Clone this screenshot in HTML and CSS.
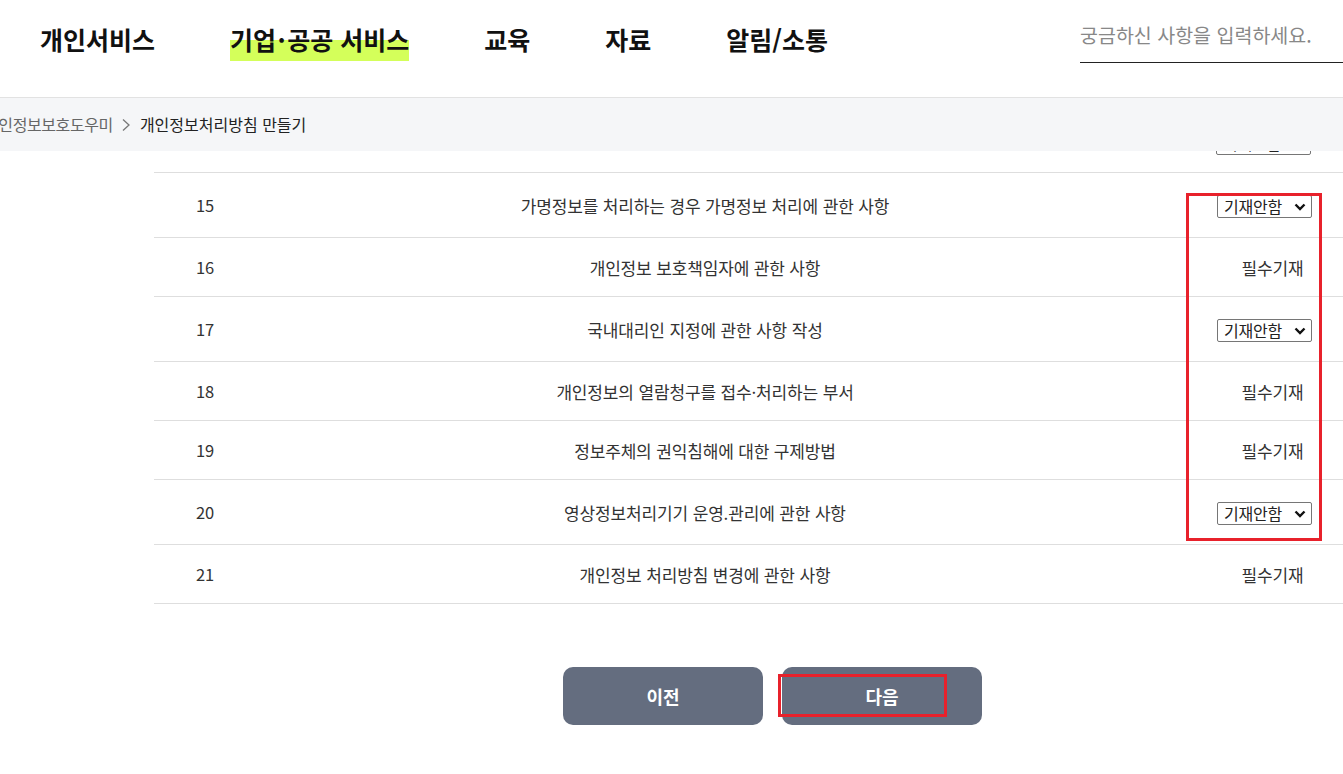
FILE: index.html
```html
<!DOCTYPE html>
<html lang="ko">
<head>
<meta charset="utf-8">
<title>개인정보처리방침 만들기</title>
<link rel="stylesheet" href="styles.css">
</head>
<body>
<header class="header">
  <nav class="gnb">
    <a class="gnb-item">개인서비스</a>
    <a class="gnb-item active"><span class="hl">기업<span class="dot">·</span>공공 서비스</span></a>
    <a class="gnb-item">교육</a>
    <a class="gnb-item">자료</a>
    <a class="gnb-item">알림/소통</a>
  </nav>
  <div class="search">
    <input class="search-input" type="text" placeholder="궁금하신 사항을 입력하세요.">
  </div>
</header>
<div class="breadcrumb">
  <div class="crumbs">
    <span class="crumb">개인정보보호도우미</span>
    <svg class="chev" width="10" height="14" viewBox="0 0 10 14"><path d="M2 1.5 L8 7 L2 12.5" fill="none" stroke="#777" stroke-width="1.3"/></svg>
    <span class="crumb current">개인정보처리방침 만들기</span>
  </div>
</div>
<main class="content">
  <div class="list">
    <div class="row clip">
      <div class="c-num"></div>
      <div class="c-title"></div>
      <div class="c-opt"><span class="sel-wrap sel-clip"><select class="sel"><option>기재안함</option></select><svg class="caret" width="12" height="8" viewBox="0 0 12 8"><path d="M1.5 1.5 L6 6 L10.5 1.5" fill="none" stroke="#111" stroke-width="2.4"/></svg></span></div>
    </div>
    <div class="row tall">
      <div class="c-num">15</div>
      <div class="c-title">가명정보를 처리하는 경우 가명정보 처리에 관한 사항</div>
      <div class="c-opt"><span class="sel-wrap"><select class="sel"><option>기재안함</option></select><svg class="caret" width="12" height="8" viewBox="0 0 12 8"><path d="M1.5 1.5 L6 6 L10.5 1.5" fill="none" stroke="#111" stroke-width="2.4"/></svg></span></div>
    </div>
    <div class="row">
      <div class="c-num">16</div>
      <div class="c-title">개인정보 보호책임자에 관한 사항</div>
      <div class="c-opt">필수기재</div>
    </div>
    <div class="row tall">
      <div class="c-num">17</div>
      <div class="c-title">국내대리인 지정에 관한 사항 작성</div>
      <div class="c-opt"><span class="sel-wrap"><select class="sel"><option>기재안함</option></select><svg class="caret" width="12" height="8" viewBox="0 0 12 8"><path d="M1.5 1.5 L6 6 L10.5 1.5" fill="none" stroke="#111" stroke-width="2.4"/></svg></span></div>
    </div>
    <div class="row">
      <div class="c-num">18</div>
      <div class="c-title">개인정보의 열람청구를 접수·처리하는 부서</div>
      <div class="c-opt">필수기재</div>
    </div>
    <div class="row">
      <div class="c-num">19</div>
      <div class="c-title">정보주체의 권익침해에 대한 구제방법</div>
      <div class="c-opt">필수기재</div>
    </div>
    <div class="row tall">
      <div class="c-num">20</div>
      <div class="c-title">영상정보처리기기 운영.관리에 관한 사항</div>
      <div class="c-opt"><span class="sel-wrap"><select class="sel"><option>기재안함</option></select><svg class="caret" width="12" height="8" viewBox="0 0 12 8"><path d="M1.5 1.5 L6 6 L10.5 1.5" fill="none" stroke="#111" stroke-width="2.4"/></svg></span></div>
    </div>
    <div class="row">
      <div class="c-num">21</div>
      <div class="c-title">개인정보 처리방침 변경에 관한 사항</div>
      <div class="c-opt">필수기재</div>
    </div>
  </div>
  <div class="btns">
    <button class="btn">이전</button>
    <button class="btn">다음</button>
  </div>
</main>
<div class="mark mark-col"></div>
<div class="mark mark-btn"></div>
</body>
</html>
```

FILE: styles.css
```css
html, body {
  margin: 0;
  padding: 0;
  overflow: hidden;
  background: #fff;
}
body {
  position: relative;
  width: 1343px;
  height: 774px;
  font-family: "Noto Sans CJK KR", "Noto Sans", sans-serif;
  color: #333;
}
.header {
  display: flex;
  align-items: flex-start;
  box-sizing: border-box;
  height: 98px;
  border-bottom: 1px solid #e2e2e2;
}
.gnb {
  display: flex;
  gap: 75px;
  padding-left: 40px;
  padding-top: 20px;
}
.gnb-item {
  font-size: 25px;
  font-weight: 700;
  letter-spacing: 0;
  color: #111;
  line-height: 38px;
}
.hl {
  display: inline-block;
  background: linear-gradient(to bottom, transparent 20px, #d4ff5a 20px);
  height: 41px;
}
.dot { padding: 0 1.5px; }
.search {
  margin-left: auto;
  width: 263px;
  padding-top: 17px;
}
.search-input {
  display: block;
  width: 100%;
  box-sizing: border-box;
  border: 0;
  border-bottom: 1px solid #222;
  padding: 0 0 10px 0;
  height: 46px;
  font-family: "Noto Sans CJK KR", sans-serif;
  font-size: 19.5px;
  letter-spacing: 0;
  outline: none;
}
.search-input::placeholder {
  color: #888;
}
.breadcrumb {
  position: relative;
  z-index: 1;
  height: 53px;
  background: #f5f6f8;
  display: flex;
  align-items: center;
}
.crumbs {
  display: flex;
  align-items: center;
  margin-left: -16px;
  font-size: 16px;
  letter-spacing: -0.4px;
  padding-bottom: 2px;
}
.crumb { color: #666; }
.crumb.current { color: #222; letter-spacing: 0; }
.chev { margin: 2px 9px 0 8px; }
.content {
  margin-left: 154px;
  width: 1237px;
}
.row {
  display: grid;
  grid-template-columns: 102px 898px 237px;
  align-items: center;
  height: 58px;
  border-bottom: 1px solid #dedede;
  font-size: 17px;
  color: #333;
  letter-spacing: -0.15px;
}
.row.tall { height: 64px; }
.row.clip {
  height: 21px;
  overflow: hidden;
  align-items: start;
}
.c-num { text-align: center; font-size: 16.5px; }
.c-title { text-align: center; }
.c-opt { text-align: center; }
.sel-wrap {
  position: relative;
  display: inline-block;
  vertical-align: middle;
  margin-right: 16px;
}
.sel-clip {
  display: block;
  width: 95px;
  margin: -19px auto 0 62px;
}
.sel {
  display: block;
  -webkit-appearance: none;
  appearance: none;
  font-family: "Noto Sans CJK KR", sans-serif;
  font-size: 16px;
  line-height: 21px;
  color: #222;
  height: 23px;
  width: 95px;
  padding: 0 0 0 6px;
  box-sizing: border-box;
  border: 1px solid #767676;
  border-radius: 2px;
  background: #fff;
  letter-spacing: -0.2px;
}
.caret {
  position: absolute;
  right: 6px;
  top: 8px;
  pointer-events: none;
}
.btns {
  display: flex;
  justify-content: center;
  gap: 19px;
  margin-top: 63px;
}
.btn {
  width: 200px;
  height: 58px;
  border: 0;
  border-radius: 10px;
  background: #646d7f;
  color: #fff;
  font-family: "Noto Sans CJK KR", sans-serif;
  font-size: 18px;
  font-weight: 700;
}
.mark {
  position: absolute;
  z-index: 2;
  border: 3px solid #e8212b;
  box-sizing: border-box;
}
.mark-col { left: 1186px; top: 193px; width: 136px; height: 348px; }
.mark-btn { left: 778px; top: 674px; width: 169px; height: 43px; }
```
